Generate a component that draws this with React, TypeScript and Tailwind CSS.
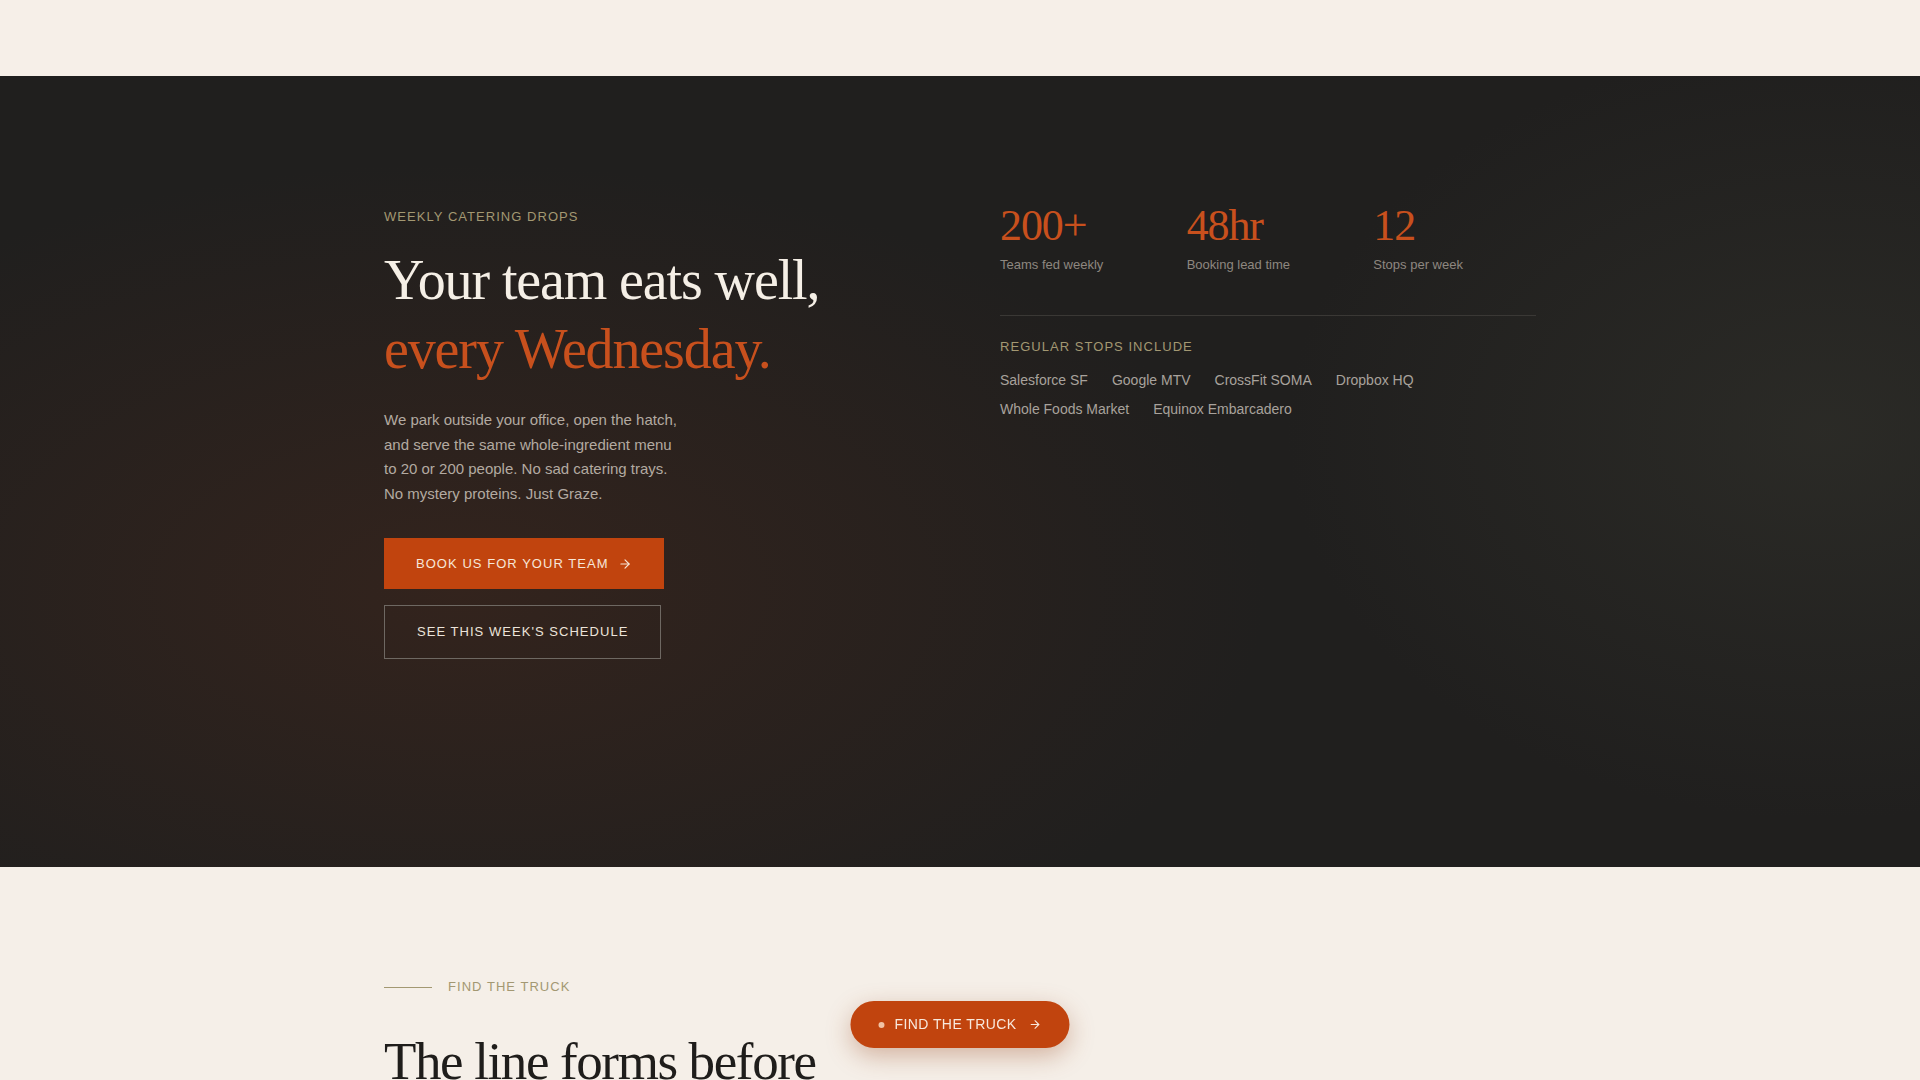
import { ArrowRight } from 'lucide-react';

const serif = { fontFamily: '"Liberation Serif", "Times New Roman", serif' };

const stats = [
  { value: '200+', label: 'Teams fed weekly' },
  { value: '48hr', label: 'Booking lead time' },
  { value: '12', label: 'Stops per week' },
];

const stops = [
  'Salesforce SF',
  'Google MTV',
  'CrossFit SOMA',
  'Dropbox HQ',
  'Whole Foods Market',
  'Equinox Embarcadero',
];

function Stat({ value, label }: { value: string; label: string }) {
  return (
    <div>
      <p className="text-[44px] leading-none tracking-tight text-[#c8501d]" style={serif}>
        {value}
      </p>
      <p className="mt-[7px] text-[13px] leading-5 text-[#8e8780]">{label}</p>
    </div>
  );
}

export default function App() {
  return (
    <div className="min-h-screen bg-[#f6efe8]" style={{ fontFamily: '"Liberation Sans", Arial, sans-serif' }}>
      {/* top bar */}
      <header className="h-[76px] bg-[#f6efe8]" />

      {/* hero */}
      <section className="min-h-[791px] bg-[#201f1e] bg-[radial-gradient(ellipse_70%_90%_at_24%_65%,rgba(70,40,28,0.5),transparent_60%),radial-gradient(ellipse_40%_70%_at_95%_45%,rgba(50,50,44,0.6),transparent_70%)] pt-32">
        <div className="mx-auto grid max-w-6xl grid-cols-2 gap-20">
          <div>
            <p className="text-[13px] leading-[26px] tracking-[0.08em] text-[#a39872]">WEEKLY CATERING DROPS</p>
            <h1 className="mt-4 text-[56px] leading-[69px] tracking-[-0.02em]" style={serif}>
              <span className="block text-[#f5efe6]">Your team eats well,</span>
              <span className="block text-[#c8501d]">every Wednesday.</span>
            </h1>
            <p className="mt-6 max-w-[300px] text-[15px] leading-[24.6px] text-[#b3aaa1]">
              We park outside your office, open the hatch, and serve the same whole-ingredient menu to 20 or 200
              people. No sad catering trays. No mystery proteins. Just Graze.
            </p>
            <div className="mt-8 flex flex-col items-start gap-4">
              <button className="flex items-center gap-[9px] bg-[#c1440e] px-8 py-[16.5px] text-[13px] leading-[18px] tracking-[0.08em] text-[#f7e6d8]">
                BOOK US FOR YOUR TEAM
                <ArrowRight size={14} strokeWidth={2} />
              </button>
              <button className="border border-[#6e6862] px-8 py-[17px] text-[13px] leading-[18px] tracking-[0.08em] text-[#ece4da]">
                SEE THIS WEEK'S SCHEDULE
              </button>
            </div>
          </div>

          <div>
            <div className="grid grid-cols-3 gap-6">
              {stats.map((s) => (
                <Stat key={s.label} value={s.value} label={s.label} />
              ))}
            </div>
            <div className="mt-10 border-t border-[#3a3835]" />
            <p className="mt-[23px] text-[13px] leading-4 tracking-[0.08em] text-[#a39872]">REGULAR STOPS INCLUDE</p>
            <div className="mt-[15px] flex flex-wrap gap-x-6 gap-y-[9px]">
              {stops.map((s) => (
                <span key={s} className="text-[14px] leading-5 text-[#a8a29c]">
                  {s}
                </span>
              ))}
            </div>
          </div>
        </div>
      </section>

      {/* find the truck */}
      <section className="bg-[#f5efe8] pt-28 pb-24">
        <div className="mx-auto max-w-6xl">
          <div className="flex items-center gap-4">
            <span className="h-px w-12 bg-[#a39872]" />
            <p className="text-[13px] leading-4 tracking-[0.08em] text-[#a39872]">FIND THE TRUCK</p>
          </div>
          <h2 className="mt-9 text-[53px] leading-[60px] tracking-[-0.026em] text-[#1f1d1b]" style={serif}>
            The line forms before
          </h2>
        </div>
      </section>

      {/* floating pill */}
      <button className="fixed bottom-8 left-1/2 flex -translate-x-1/2 items-center gap-2.5 rounded-full bg-[#c1440e] px-7 py-[14px] text-[14px] leading-[19px] tracking-[0.03em] text-[#f8e8dc] shadow-[0_8px_24px_rgba(150,70,30,0.35)]">
        <span className="h-1.5 w-1.5 rounded-full bg-[#f1c2a4]" />
        FIND THE TRUCK
        <ArrowRight size={13} strokeWidth={2} className="ml-0.5" />
      </button>
    </div>
  );
}
